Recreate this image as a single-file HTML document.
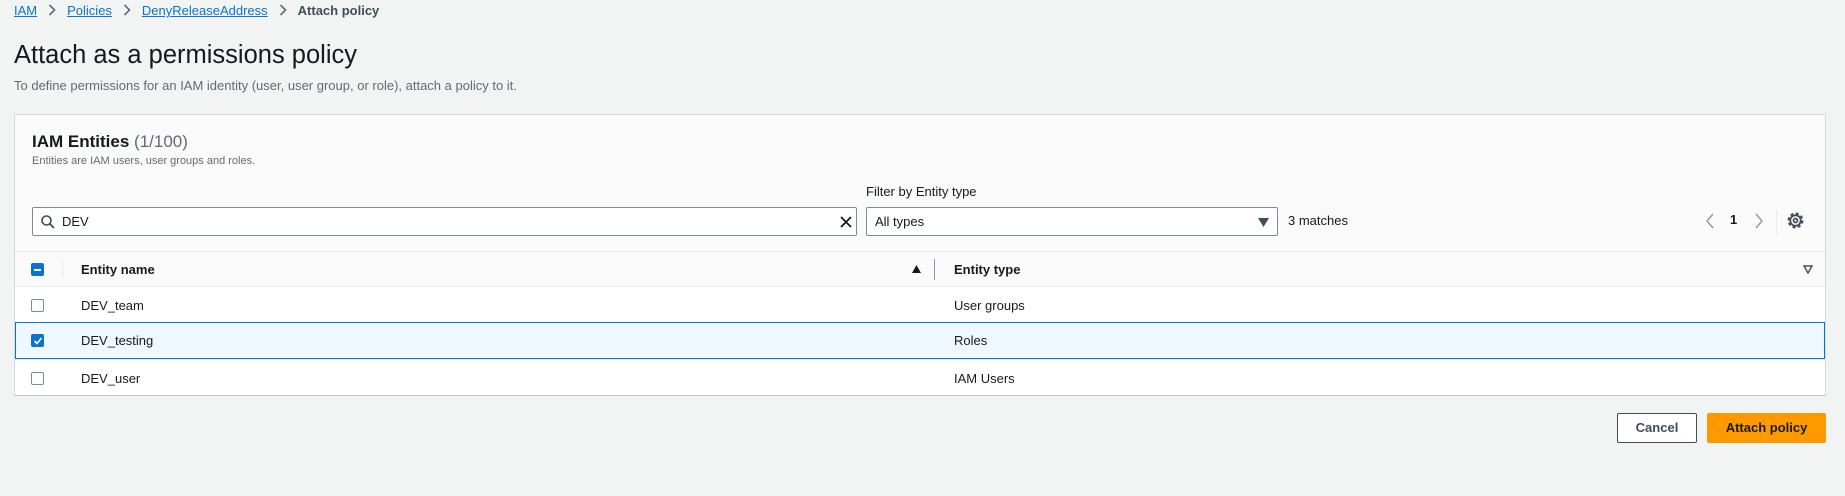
<!DOCTYPE html>
<html><head><meta charset="utf-8"><style>
*{box-sizing:border-box;margin:0;padding:0}
body{width:1845px;height:496px;background:#f2f3f3;font-family:"Liberation Sans",sans-serif;color:#16191f;position:relative;overflow:hidden}
.a{position:absolute;white-space:nowrap}
.lnk{color:#0972d3;text-decoration:underline}
.cb{position:absolute;width:13px;height:13px;border:1px solid #7d8998;border-radius:2px;background:#fff}
.cb.on{background:#0972d3;border-color:#0972d3}
.row{position:absolute;left:15px;width:1810px;height:36px;border-top:1px solid #e9ebed;background:#fff}
.t{font-size:13px;top:11px}
.chev{display:inline-block;vertical-align:-1px;margin:0 11px}
</style></head><body>
<div class="a" style="left:14px;top:3px;font-size:13px;line-height:16px">
<span class="lnk">IAM</span><svg class="chev" width="8" height="12" viewBox="0 0 8 12"><path d="M1.5 1l5 5-5 5" fill="none" stroke="#5f6b7a" stroke-width="1.6"/></svg><span class="lnk">Policies</span><svg class="chev" width="8" height="12" viewBox="0 0 8 12"><path d="M1.5 1l5 5-5 5" fill="none" stroke="#5f6b7a" stroke-width="1.6"/></svg><span class="lnk">DenyReleaseAddress</span><svg class="chev" width="8" height="12" viewBox="0 0 8 12"><path d="M1.5 1l5 5-5 5" fill="none" stroke="#5f6b7a" stroke-width="1.6"/></svg><b style="color:#414d5c">Attach policy</b></div>
<div class="a" style="left:14px;top:41px;font-size:25.5px;color:#16191f">Attach as a permissions policy</div>
<div class="a" style="left:14px;top:78px;font-size:13px;color:#5f6b7a">To define permissions for an IAM identity (user, user group, or role), attach a policy to it.</div>

<div class="a" style="left:14px;top:114px;width:1812px;height:282px;background:#fafafa;border:1px solid #d5dbdb;border-bottom:2px solid #c6c6cd"></div>
<div class="a" style="left:32px;top:132px;font-size:17px"><b>IAM Entities</b> <span style="color:#5f6b7a">(1/100)</span></div>
<div class="a" style="left:32px;top:155px;font-size:11px;color:#5f6b7a">Entities are IAM users, user groups and roles.</div>
<div class="a" style="left:866px;top:184px;font-size:13px">Filter by Entity type</div>
<div class="a" style="left:32px;top:207px;width:825px;height:29px;background:#fff;border:1px solid #7d8998;border-radius:2px">
<svg class="a" style="left:7px;top:6px" width="16" height="16" viewBox="0 0 16 16"><circle cx="6.5" cy="6.5" r="4.5" fill="none" stroke="#414d5c" stroke-width="1.6"/><path d="M10 10l4 4" stroke="#414d5c" stroke-width="1.8"/></svg>
<span class="a" style="left:29px;top:6px;font-size:13px">DEV</span>
<svg class="a" style="left:806px;top:7px" width="14" height="14" viewBox="0 0 14 14"><path d="M2 2l10 10M12 2L2 12" stroke="#16191f" stroke-width="1.8"/></svg></div>
<div class="a" style="left:866px;top:207px;width:412px;height:29px;background:#fff;border:1px solid #7d8998;border-radius:2px">
<span class="a" style="left:8px;top:6px;font-size:13px">All types</span>
<svg class="a" style="left:391px;top:10px" width="11" height="9" viewBox="0 0 11 9"><path d="M0 0h11L5.5 9z" fill="#414d5c"/></svg></div>
<div class="a" style="left:1288px;top:213px;font-size:13px">3 matches</div>
<svg class="a" style="left:1704px;top:213px" width="12" height="16" viewBox="0 0 12 16"><path d="M9 1L3 8l6 7" fill="none" stroke="#8d99a8" stroke-width="1.4"/></svg>
<div class="a" style="left:1730px;top:212px;font-size:13px;font-weight:bold">1</div>
<svg class="a" style="left:1753px;top:213px" width="12" height="16" viewBox="0 0 12 16"><path d="M3 1l6 7-6 7" fill="none" stroke="#8d99a8" stroke-width="1.4"/></svg>
<div class="a" style="left:1776px;top:209px;width:1px;height:26px;background:#e9ebed"></div>
<svg class="a" style="left:1786px;top:211px" width="19" height="19" viewBox="0 0 16 16"><circle cx="8" cy="8" r="5.6" fill="none" stroke="#414d5c" stroke-width="2.2" stroke-dasharray="2.4 2"/><circle cx="8" cy="8" r="4.4" fill="none" stroke="#414d5c" stroke-width="1.5"/><circle cx="8" cy="8" r="1.7" fill="none" stroke="#414d5c" stroke-width="1.4"/></svg>

<div class="row" style="top:251px;background:#fafafa;height:35px">
<div class="cb on" style="left:16px;top:11px"><div style="position:absolute;left:2px;top:5px;width:7px;height:2px;background:#fff"></div></div>
<div class="a" style="left:47px;top:8px;width:1px;height:19px;background:#e9ebed"></div>
<div class="a t" style="left:66px;top:10px;font-weight:bold">Entity name</div>
<svg class="a" style="left:897px;top:13px" width="9" height="8" viewBox="0 0 9 8"><path d="M4.5 0L9 8H0z" fill="#16191f"/></svg>
<div class="a" style="left:919px;top:7px;width:1px;height:21px;background:#8d99a8"></div>
<div class="a t" style="left:939px;top:10px;font-weight:bold">Entity type</div>
<svg class="a" style="left:1788px;top:13px" width="10" height="9" viewBox="0 0 10 9"><path d="M1 1h8L5 8z" fill="none" stroke="#414d5c" stroke-width="1.4"/></svg>
</div>
<div class="row" style="top:286px">
<div class="cb" style="left:16px;top:12px"></div>
<div class="a t" style="left:66px">DEV_team</div><div class="a t" style="left:939px">User groups</div></div>
<div class="row" style="top:322px;background:#f0f8ff;border:1px solid #0972d3;height:37px">
<div class="cb on" style="left:15px;top:11px"><svg style="position:absolute;left:1px;top:1px" width="10" height="10" viewBox="0 0 10 10"><path d="M1.5 5l2.5 2.5L8.5 2" fill="none" stroke="#fff" stroke-width="1.6"/></svg></div>
<div class="a t" style="left:65px;top:10px">DEV_testing</div><div class="a t" style="left:938px;top:10px">Roles</div></div>
<div class="row" style="top:359px">
<div class="cb" style="left:16px;top:12px"></div>
<div class="a t" style="left:66px">DEV_user</div><div class="a t" style="left:939px">IAM Users</div></div>

<div class="a" style="left:1617px;top:413px;width:80px;height:30px;border:1px solid #414d5c;border-radius:2px;background:#fff;font-size:13px;font-weight:bold;color:#414d5c;text-align:center;line-height:28px">Cancel</div>
<div class="a" style="left:1707px;top:413px;width:119px;height:30px;border-radius:2px;background:#ff9900;font-size:13px;font-weight:bold;color:#16191f;text-align:center;line-height:30px">Attach policy</div>
</body></html>
